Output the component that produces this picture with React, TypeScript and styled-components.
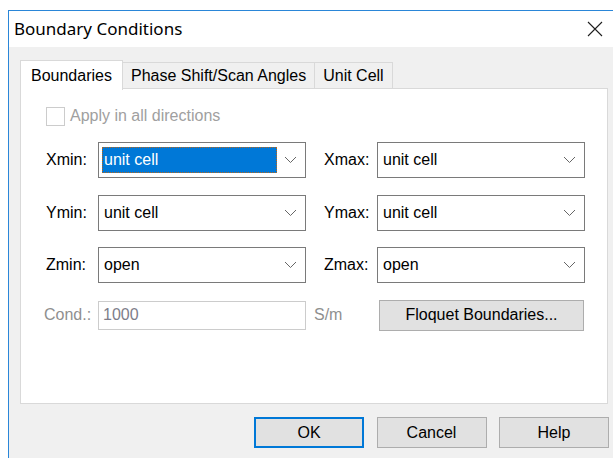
import React from 'react';
import styled, {createGlobalStyle} from "styled-components";

const GlobalStyle = createGlobalStyle`
  html, body {
    margin: 0;
    padding: 0;
    background: #ffffff;
    overflow: hidden;
  }
  body {
    font-family: "Liberation Sans", Arial, sans-serif;
  }
`

type ComboProps = {
    value: string
    selected?: boolean
}
const Combo: React.FC<ComboProps> = ({value, selected}) => {
    return (
        <StyledCombo>
            <StyledComboValue $selected={selected}>{value}</StyledComboValue>
            <StyledChevron width="13" height="8" viewBox="0 0 13 8">
                <path d="M1 1 L6.5 6.5 L12 1" fill="none" stroke="#666666" strokeWidth="1"/>
            </StyledChevron>
        </StyledCombo>
    );
}

const tabs = ["Boundaries", "Phase Shift/Scan Angles", "Unit Cell"];

const rows = [
    {min: "Xmin:", max: "Xmax:", minValue: "unit cell", maxValue: "unit cell", selected: true},
    {min: "Ymin:", max: "Ymax:", minValue: "unit cell", maxValue: "unit cell"},
    {min: "Zmin:", max: "Zmax:", minValue: "open", maxValue: "open"},
];

export default function App() {
    return (
        <>
            <GlobalStyle/>
            <StyledWindow>
                <StyledTitleBar>
                    <StyledTitle>Boundary Conditions</StyledTitle>
                    <StyledClose>
                        <svg width="16" height="16" viewBox="0 0 16 16">
                            <path d="M1 1 L15 15 M15 1 L1 15" stroke="#1e1e1e" strokeWidth="1.1"/>
                        </svg>
                    </StyledClose>
                </StyledTitleBar>
                <StyledClient>
                    <StyledTabs>
                        {tabs.map((t, i) => (
                            <StyledTab key={t} $active={i === 0}>{t}</StyledTab>
                        ))}
                    </StyledTabs>
                    <StyledPanel>
                        <StyledCheckRow>
                            <StyledCheckbox/>
                            <span>Apply in all directions</span>
                        </StyledCheckRow>
                        <StyledGrid>
                            {rows.map(r => (
                                <React.Fragment key={r.min}>
                                    <StyledLabel>{r.min}</StyledLabel>
                                    <Combo value={r.minValue} selected={r.selected}/>
                                    <StyledLabel $indent={18}>{r.max}</StyledLabel>
                                    <Combo value={r.maxValue}/>
                                </React.Fragment>
                            ))}
                            <StyledLabel $disabled $indent={-2}>Cond.:</StyledLabel>
                            <StyledInput>1000</StyledInput>
                            <StyledLabel $disabled $indent={8}>S/m</StyledLabel>
                            <StyledButton $wide>Floquet Boundaries...</StyledButton>
                        </StyledGrid>
                    </StyledPanel>
                    <StyledFooter>
                        <StyledButton $default>OK</StyledButton>
                        <StyledButton>Cancel</StyledButton>
                        <StyledButton>Help</StyledButton>
                    </StyledFooter>
                </StyledClient>
            </StyledWindow>
        </>
    );
}

const StyledWindow = styled.div`
  box-sizing: border-box;
  margin: 10px 0 0 8px;
  width: 609px;
  height: 470px;
  border-top: 1px solid #2a86d8;
  border-left: 1px solid #2a86d8;
  display: flex;
  flex-direction: column;
  background: #f0f0f0;
`
const StyledTitleBar = styled.div`
  height: 36px;
  background: #ffffff;
  display: flex;
  align-items: center;
  justify-content: space-between;
  padding-left: 5px;
`
const StyledTitle = styled.span`
  font-family: "Noto Sans", "Liberation Sans", sans-serif;
  font-size: 17px;
  color: #000000;
  margin-top: -1px;
`
const StyledClose = styled.div`
  width: 44px;
  height: 36px;
  display: flex;
  align-items: center;
  justify-content: center;
`
const StyledClient = styled.div`
  flex: 1;
  padding: 13px 9px 0 11px;
  display: flex;
  flex-direction: column;
`
const StyledTabs = styled.div`
  display: flex;
  align-items: flex-end;
  height: 29px;
  position: relative;
  z-index: 1;
  margin-bottom: -1px;
`
const StyledTab = styled.div<{ $active?: boolean }>`
  box-sizing: border-box;
  padding: ${p => p.$active ? '0 10px' : '0 8px'};
  margin-bottom: ${p => p.$active ? '-1px' : '0'};
  height: ${p => p.$active ? '30px' : '27px'};
  display: flex;
  align-items: center;
  font-size: 16px;
  color: #000000;
  background: ${p => p.$active ? '#ffffff' : '#f0f0f0'};
  border: 1px solid #d9d9d9;
  border-bottom: ${p => p.$active ? 'none' : '1px solid #d9d9d9'};
  & + & {
    border-left: ${p => p.$active ? '1px solid #d9d9d9' : 'none'};
  }
`
const StyledPanel = styled.div`
  box-sizing: border-box;
  height: 316px;
  background: #ffffff;
  border: 1px solid #d9d9d9;
  padding: 18px 0 0 25px;
`
const StyledCheckRow = styled.div`
  display: flex;
  align-items: center;
  gap: 5px;
  height: 18px;
  font-size: 16px;
  color: #a0a0a0;
`
const StyledCheckbox = styled.span`
  box-sizing: border-box;
  width: 19px;
  height: 19px;
  border: 1px solid #cccccc;
  background: #ffffff;
`
const StyledGrid = styled.div`
  display: grid;
  grid-template-columns: 52px 208px 71px 208px;
  grid-template-rows: 36px 36px 36px 31px;
  row-gap: 16.5px;
  align-items: center;
  margin-top: 17px;
`
const StyledLabel = styled.span<{ $disabled?: boolean, $indent?: number }>`
  font-size: 16px;
  color: ${p => p.$disabled ? '#8f8f8f' : '#000000'};
  padding-left: ${p => Math.max(p.$indent ?? 0, 0)}px;
  margin-left: ${p => Math.min(p.$indent ?? 0, 0)}px;
`
const StyledCombo = styled.div`
  box-sizing: border-box;
  height: 36px;
  border: 1px solid #7a7a7a;
  background: #ffffff;
  display: flex;
  align-items: center;
  padding: 3px 8px 3px 3px;
`
const StyledComboValue = styled.span<{ $selected?: boolean }>`
  box-sizing: border-box;
  flex: 0 0 175px;
  height: 26px;
  display: flex;
  align-items: center;
  padding-left: 2px;
  font-size: 16px;
  color: ${p => p.$selected ? '#ffffff' : '#000000'};
  background: ${p => p.$selected ? '#0078d7' : 'transparent'};
  outline: ${p => p.$selected ? '1px dotted #b8661a' : 'none'};
  outline-offset: -1px;
`
const StyledChevron = styled.svg`
  margin-left: auto;
`
const StyledInput = styled.div`
  box-sizing: border-box;
  height: 29px;
  border: 1px solid #cccccc;
  background: #ffffff;
  display: flex;
  align-items: center;
  padding-left: 4px;
  font-size: 16px;
  color: #7d7d8a;
`
const StyledButton = styled.div<{ $default?: boolean, $wide?: boolean }>`
  box-sizing: border-box;
  width: ${p => p.$wide ? '205px' : '110px'};
  height: 31px;
  margin-left: ${p => p.$wide ? '2px' : '0'};
  display: flex;
  align-items: center;
  justify-content: center;
  font-size: 16px;
  color: #000000;
  background: #e1e1e1;
  border: ${p => p.$default ? '2px solid #0078d7' : '1px solid #adadad'};
`
const StyledFooter = styled.div`
  display: flex;
  justify-content: flex-end;
  gap: 12.5px;
  margin-top: 13px;
  margin-right: -1px;
`
